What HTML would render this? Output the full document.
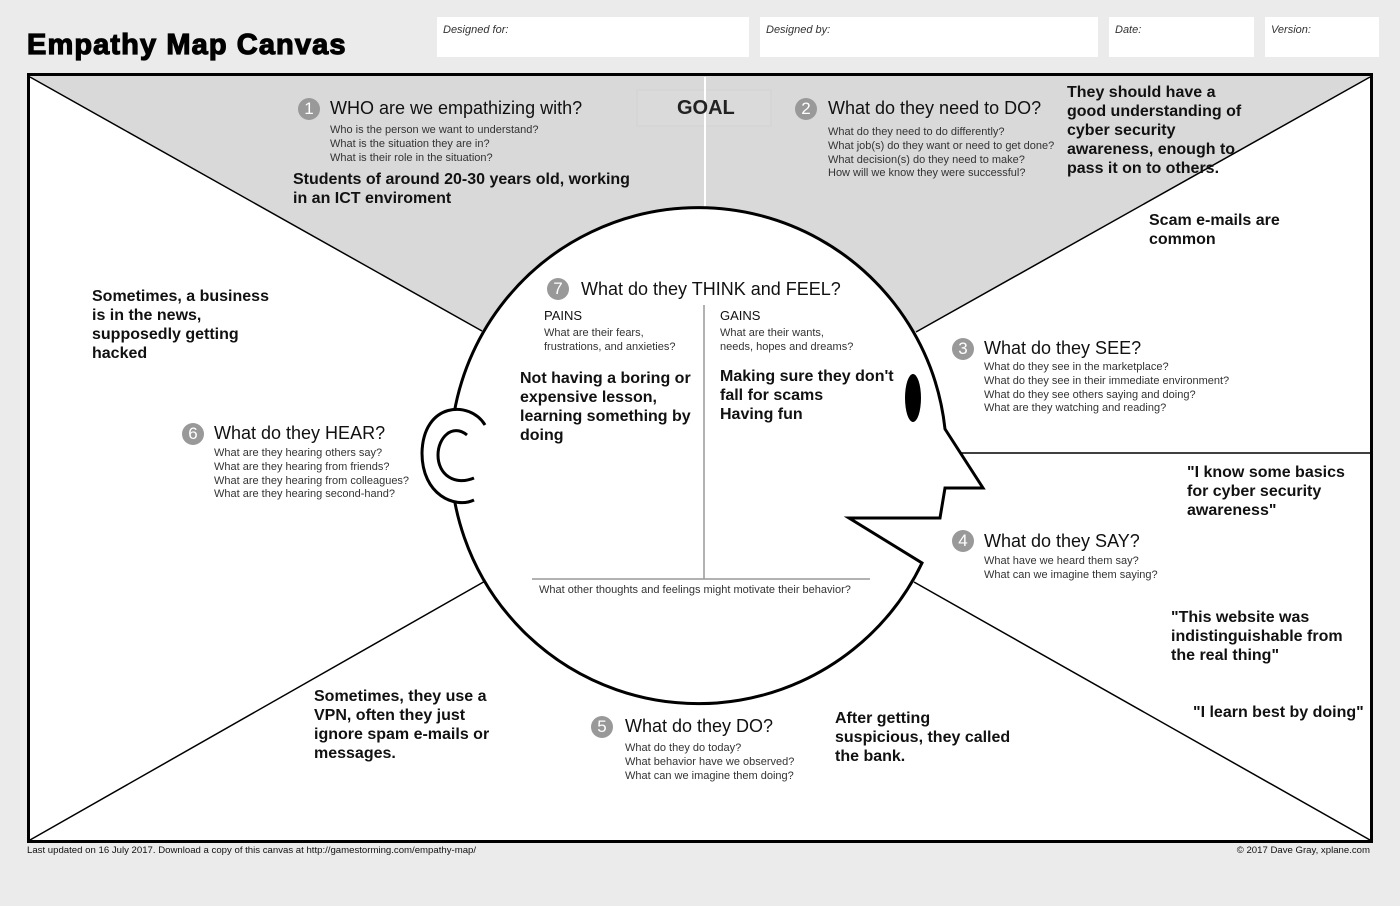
<!DOCTYPE html>
<html><head><meta charset="utf-8"><style>
body{margin:0;width:1400px;height:906px;background:#ebebeb;position:relative;overflow:hidden;font-family:"Liberation Sans",sans-serif}
.a{position:absolute;white-space:nowrap}
.h{font-size:18px;color:#111}
.q{font-size:11px;color:#333;line-height:13.8px}
.b{font-size:16px;font-weight:bold;color:#111;line-height:19px}
.n{position:absolute;width:22px;height:22px;border-radius:50%;background:#999;color:#fff;font-size:17px;text-align:center;line-height:22px}
.f{position:absolute;background:#fff;top:17px;height:40px}
.f span{position:absolute;left:6px;top:7px;font-size:11px;font-style:italic;color:#333}
</style></head><body>
<div class="a" style="left:27px;top:29px;font-size:29px;font-weight:bold;color:#000;-webkit-text-stroke:1.2px #000;letter-spacing:1.1px">Empathy Map Canvas</div>
<div class="f" style="left:437px;width:312px"><span>Designed for:</span></div>
<div class="f" style="left:760px;width:338px"><span>Designed by:</span></div>
<div class="f" style="left:1109px;width:145px"><span>Date:</span></div>
<div class="f" style="left:1265px;width:114px"><span>Version:</span></div>
<svg style="position:absolute;left:0;top:0" width="1400" height="906">
<rect x="28.5" y="74.5" width="1343" height="767" fill="#fff" stroke="#000" stroke-width="3"/>
<polygon points="30,76 1370,76 700,453" fill="#d9d9d9"/>
<rect x="637" y="90" width="134" height="36" fill="#dadada" stroke="#d2d2d2" stroke-width="1"/>
<line x1="705" y1="77" x2="705" y2="210" stroke="#fff" stroke-width="2"/>
<line x1="30" y1="77" x2="482" y2="331" stroke="#000" stroke-width="1.5"/>
<line x1="1370" y1="77" x2="916" y2="332" stroke="#000" stroke-width="1.5"/>
<line x1="30" y1="840" x2="487" y2="580" stroke="#000" stroke-width="1.5"/>
<line x1="1370" y1="840" x2="914" y2="582" stroke="#000" stroke-width="1.5"/>
<line x1="960" y1="453" x2="1370" y2="453" stroke="#000" stroke-width="1.5"/>
<path d="M945,429 L983,488 L945,488 L940,518 L849,518 L922,563 A248,248 0 1 1 945,429 Z" fill="#fff" stroke="#000" stroke-width="3" stroke-linejoin="miter"/>
<ellipse cx="913" cy="398" rx="8" ry="24" fill="#000"/>
<path d="M485,425 C470,400 423,402 422,453 C422,495 455,509 474,500" fill="#fff" stroke="#000" stroke-width="3"/>
<path d="M467,435 C452,423 438,438 438,455 C438,475 455,486 474,478" fill="none" stroke="#000" stroke-width="3"/>
<line x1="704" y1="305" x2="704" y2="579" stroke="#999" stroke-width="1.5"/>
<line x1="532" y1="579" x2="870" y2="579" stroke="#999" stroke-width="1.5"/>
</svg>
<div class="a" style="left:677px;top:97px;font-size:20px;font-weight:bold;color:#222">GOAL</div>

<div class="n" style="left:298px;top:98px">1</div>
<div class="a h" style="left:330px;top:98px">WHO are we empathizing with?</div>
<div class="a q" style="left:330px;top:124px">Who is the person we want to understand?<br>What is the situation they are in?<br>What is their role in the situation?</div>
<div class="a b" style="left:293px;top:170px">Students of around 20-30 years old, working<br>in an ICT enviroment</div>

<div class="n" style="left:795px;top:98px">2</div>
<div class="a h" style="left:828px;top:98px">What do they need to DO?</div>
<div class="a q" style="left:828px;top:126px">What do they need to do differently?<br>What job(s) do they want or need to get done?<br>What decision(s) do they need to make?<br>How will we know they were successful?</div>
<div class="a b" style="left:1067px;top:83px">They should have a<br>good understanding of<br>cyber security<br>awareness, enough to<br>pass it on to others.</div>

<div class="a b" style="left:1149px;top:211px">Scam e-mails are<br>common</div>

<div class="n" style="left:952px;top:338px">3</div>
<div class="a h" style="left:984px;top:338px">What do they SEE?</div>
<div class="a q" style="left:984px;top:361px">What do they see in the marketplace?<br>What do they see in their immediate environment?<br>What do they see others saying and doing?<br>What are they watching and reading?</div>

<div class="a b" style="left:1187px;top:463px">"I know some basics<br>for cyber security<br>awareness"</div>

<div class="n" style="left:952px;top:530px">4</div>
<div class="a h" style="left:984px;top:531px">What do they SAY?</div>
<div class="a q" style="left:984px;top:555px">What have we heard them say?<br>What can we imagine them saying?</div>

<div class="a b" style="left:1171px;top:608px">"This website was<br>indistinguishable from<br>the real thing"</div>
<div class="a b" style="left:1193px;top:703px">"I learn best by doing"</div>

<div class="n" style="left:591px;top:716px">5</div>
<div class="a h" style="left:625px;top:716px">What do they DO?</div>
<div class="a q" style="left:625px;top:742px">What do they do today?<br>What behavior have we observed?<br>What can we imagine them doing?</div>
<div class="a b" style="left:835px;top:709px">After getting<br>suspicious, they called<br>the bank.</div>

<div class="a b" style="left:314px;top:687px">Sometimes, they use a<br>VPN, often they just<br>ignore spam e-mails or<br>messages.</div>

<div class="n" style="left:182px;top:423px">6</div>
<div class="a h" style="left:214px;top:423px">What do they HEAR?</div>
<div class="a q" style="left:214px;top:447px">What are they hearing others say?<br>What are they hearing from friends?<br>What are they hearing from colleagues?<br>What are they hearing second-hand?</div>

<div class="a b" style="left:92px;top:287px">Sometimes, a business<br>is in the news,<br>supposedly getting<br>hacked</div>

<div class="n" style="left:547px;top:278px">7</div>
<div class="a h" style="left:581px;top:279px">What do they THINK and FEEL?</div>
<div class="a" style="left:544px;top:308px;font-size:13px;color:#111">PAINS</div>
<div class="a q" style="left:544px;top:327px">What are their fears,<br>frustrations, and anxieties?</div>
<div class="a" style="left:720px;top:308px;font-size:13px;color:#111">GAINS</div>
<div class="a q" style="left:720px;top:327px">What are their wants,<br>needs, hopes and dreams?</div>
<div class="a b" style="left:520px;top:369px">Not having a boring or<br>expensive lesson,<br>learning something by<br>doing</div>
<div class="a b" style="left:720px;top:367px">Making sure they don't<br>fall for scams<br>Having fun</div>
<div class="a q" style="left:539px;top:584px">What other thoughts and feelings might motivate their behavior?</div>

<div class="a" style="left:27px;top:845px;font-size:9.6px;color:#111">Last updated on 16 July 2017. Download a copy of this canvas at http://gamestorming.com/empathy-map/</div>
<div class="a" style="right:30px;top:845px;font-size:9.6px;color:#111">© 2017 Dave Gray, xplane.com</div>
</body></html>
